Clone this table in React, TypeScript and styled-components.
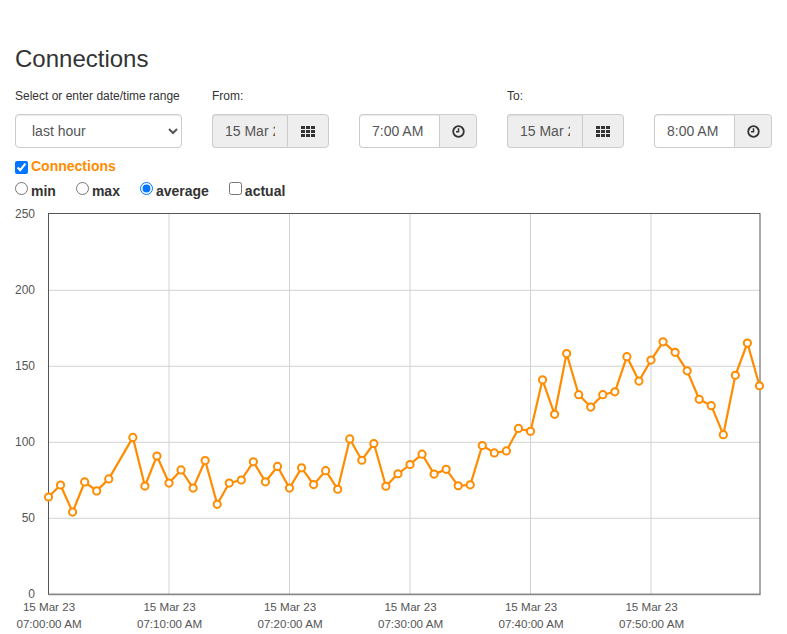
import React from "react";
import styled, { createGlobalStyle } from "styled-components";

const GlobalStyle = createGlobalStyle`
  html, body { margin: 0; padding: 0; background: #fff; }
  body {
    font-family: "Liberation Sans", Helvetica, Arial, sans-serif;
    font-size: 14px;
    line-height: 1.42857;
    color: #333;
  }
  * { box-sizing: border-box; }
`;

const Page = styled.div`
  padding: 45.5px 15px 0;
`;

const Title = styled.h3`
  margin: 0;
  font-size: 24px;
  font-weight: 500;
  line-height: 1.1;
  color: #333;
`;

const RangeGrid = styled.div`
  display: grid;
  grid-template-columns: 167px 265px 265px;
  column-gap: 30px;
  margin-top: 16.5px;
`;

const Field = styled.div`
  display: flex;
  flex-direction: column;
`;

const FieldLabel = styled.label`
  display: block;
  font-size: 12px;
  line-height: 17px;
  margin-bottom: 9px;
  color: #333;
`;

const RangeSelect = styled.select`
  width: 100%;
  height: 34px;
  padding: 6px 8px 6px 12px;
  font-family: inherit;
  font-size: 14px;
  color: #555;
  background: #fff;
  border: 1px solid #ccc;
  border-radius: 4px;
  box-shadow: inset 0 1px 1px rgba(0, 0, 0, 0.075);
  outline: none;
`;

const PickerRow = styled.div`
  display: flex;
  gap: 30px;
`;

const InputGroup = styled.div<{ $w: number }>`
  display: flex;
  width: ${(p) => p.$w}px;
  height: 34px;
`;

const GroupInput = styled.input<{ $muted?: boolean }>`
  flex: 1;
  min-width: 0;
  height: 34px;
  padding: 6px 12px;
  font-family: inherit;
  font-size: 14px;
  color: #555;
  background: ${(p) => (p.$muted ? "#eee" : "#fff")};
  border: 1px solid #ccc;
  border-right: 0;
  border-radius: 4px 0 0 4px;
  box-shadow: inset 0 1px 1px rgba(0, 0, 0, 0.075);
  outline: none;
`;

const Addon = styled.span<{ $w: number }>`
  flex: none;
  width: ${(p) => p.$w}px;
  display: flex;
  align-items: center;
  justify-content: center;
  background: #eee;
  border: 1px solid #ccc;
  border-radius: 0 4px 4px 0;
  color: #333;
`;

const ToggleRow = styled.div<{ $top: number }>`
  display: flex;
  margin-top: ${(p) => p.$top}px;
  line-height: 20px;
  height: 20px;
`;

const Option = styled.label<{ $accent?: boolean }>`
  display: flex;
  align-items: flex-start;
  margin-right: 20px;
  font-weight: bold;
  font-size: 14px;
  color: ${(p) => (p.$accent ? "#ff8c00" : "#333")};
`;

const Tick = styled.input<{ $offset: number }>`
  width: 13px;
  height: 13px;
  margin: ${(p) => p.$offset}px 3px 0 0;
`;

const ChartWrap = styled.div`
  margin-top: 0;
`;

const GridIcon = () => (
  <svg width="14" height="11" viewBox="0 0 14 11" fill="#333">
    {[0, 5, 10].map((x) =>
      [0, 4, 8].map((y) => <rect key={`${x}-${y}`} x={x} y={y} width="4" height="3" />)
    )}
  </svg>
);

const ClockIcon = () => (
  <svg width="13" height="13" viewBox="0 0 13 13" fill="none" stroke="#333">
    <circle cx="6.5" cy="6.5" r="5.3" strokeWidth="1.8" />
    <path d="M6.5 3.2V6.8H4" strokeWidth="1.5" />
  </svg>
);

const values: (number | null)[] = [
  64.0, 71.9, 54.1, 73.9, 68.0, 75.9, null, 103.2, 71.2, 91.0,
  73.2, 81.8, 69.9, 88.0, 59.2, 73.2, 75.2, 87.2, 74.0, 84.1,
  69.9, 83.2, 72.2, 81.3, 69.1, 102.2, 88.2, 99.2, 71.1, 79.3,
  85.4, 92.2, 79.1, 82.2, 71.4, 72.0, 97.9, 93.0, 94.3, 109.1,
  107.2, 141.1, 118.4, 158.4, 131.3, 123.2, 131.3, 133.2, 156.3, 140.3,
  154.1, 166.1, 159.2, 147.0, 128.3, 124.1, 105.0, 144.1, 165.3, 137.2,
];

const X0 = 48.5;
const STEP = 12.05;
const Y0 = 594.3;
const SCALE = 1.52;
const px = (i: number) => X0 + i * STEP;
const py = (v: number) => Y0 - v * SCALE;

const ORANGE = "#ff8c00";

const Chart = () => {
  const pts = values
    .map((v, i) => (v == null ? null : { x: px(i), y: py(v) }))
    .filter((p): p is { x: number; y: number } => p !== null);
  const d = pts.map((p, i) => `${i ? "L" : "M"}${p.x.toFixed(1)} ${p.y.toFixed(1)}`).join(" ");
  const yTicks = [0, 50, 100, 150, 200, 250];
  const xTicks = ["07:00:00 AM", "07:10:00 AM", "07:20:00 AM", "07:30:00 AM", "07:40:00 AM", "07:50:00 AM"];
  return (
    <svg width="772" height="433" viewBox="15 201 772 433" style={{ display: "block" }}>
      {[50, 100, 150, 200].map((v) => (
        <line key={v} x1={X0} x2={760} y1={py(v)} y2={py(v)} stroke="#d3d3d3" strokeWidth="1" />
      ))}
      {[1, 2, 3, 4, 5].map((k) => (
        <line key={k} x1={X0 + k * 120.5} x2={X0 + k * 120.5} y1={213.5} y2={594} stroke="#d3d3d3" strokeWidth="1" />
      ))}
      <rect x={X0} y={213.5} width={760 - X0} height={594.3 - 213.5} fill="none" stroke="#555" strokeWidth="1" />
      <line x1={X0} x2={760.5} y1={594.5} y2={594.5} stroke="#888" strokeWidth="1.5" />
      {yTicks.map((v) => (
        <text key={v} x={35} y={v === 250 ? 217.5 : py(v) + 3.8} textAnchor="end" fontSize="12" fill="#555"
          fontFamily='"Liberation Sans", Arial, sans-serif'>
          {v}
        </text>
      ))}
      {xTicks.map((t, k) => (
        <g key={t} fontSize="11.6" fill="#555" fontFamily='"Liberation Sans", Arial, sans-serif' textAnchor="middle">
          <text x={X0 + k * 120.5 + 0.5} y={611}>15 Mar 23</text>
          <text x={X0 + k * 120.5 + 0.5} y={627.7}>{t}</text>
        </g>
      ))}
      <path d={d} fill="none" stroke={ORANGE} strokeWidth="2.2" strokeLinejoin="round" />
      {pts.map((p, i) => (
        <circle key={i} cx={p.x} cy={p.y} r="3.6" fill="#fff" stroke={ORANGE} strokeWidth="2" />
      ))}
    </svg>
  );
};

export default function App() {
  return (
    <>
      <GlobalStyle />
      <Page>
        <Title>Connections</Title>
        <RangeGrid>
          <Field>
            <FieldLabel>Select or enter date/time range</FieldLabel>
            <RangeSelect defaultValue="hour">
              <option value="hour">last hour</option>
              <option value="day">last day</option>
              <option value="week">last week</option>
            </RangeSelect>
          </Field>
          <Field>
            <FieldLabel>From:</FieldLabel>
            <PickerRow>
              <InputGroup $w={117}>
                <GroupInput $muted readOnly value="15 Mar 2023" />
                <Addon $w={42}><GridIcon /></Addon>
              </InputGroup>
              <InputGroup $w={118}>
                <GroupInput readOnly value="7:00 AM" />
                <Addon $w={38}><ClockIcon /></Addon>
              </InputGroup>
            </PickerRow>
          </Field>
          <Field>
            <FieldLabel>To:</FieldLabel>
            <PickerRow>
              <InputGroup $w={117}>
                <GroupInput $muted readOnly value="15 Mar 2023" />
                <Addon $w={42}><GridIcon /></Addon>
              </InputGroup>
              <InputGroup $w={118}>
                <GroupInput readOnly value="8:00 AM" />
                <Addon $w={38}><ClockIcon /></Addon>
              </InputGroup>
            </PickerRow>
          </Field>
        </RangeGrid>
        <ToggleRow $top={7.6}>
          <Option $accent>
            <Tick type="checkbox" defaultChecked $offset={5.5} />
            Connections
          </Option>
        </ToggleRow>
        <ToggleRow $top={5}>
          <Option>
            <Tick type="radio" name="agg" $offset={1.5} />
            min
          </Option>
          <Option>
            <Tick type="radio" name="agg" $offset={1.5} />
            max
          </Option>
          <Option>
            <Tick type="radio" name="agg" defaultChecked $offset={1.5} />
            average
          </Option>
          <Option>
            <Tick type="checkbox" $offset={1.5} />
            actual
          </Option>
        </ToggleRow>
        <ChartWrap>
          <Chart />
        </ChartWrap>
      </Page>
    </>
  );
}
